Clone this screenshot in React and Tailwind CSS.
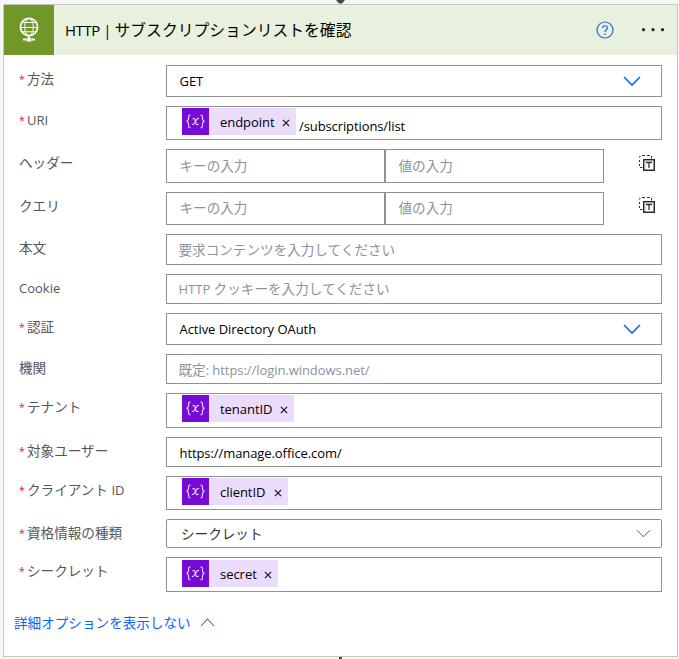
const chevronDown = 'M1 1 L9 9 L17 1';

function Ja({ children }) {
  return <span className="text-[13.6px] tracking-normal">{children}</span>;
}

function Row({ label, required, height, children }) {
  return (
    <div className="flex">
      <div className="flex h-7 w-[147px] shrink-0 items-center text-[#555657]">
        {required && <span className="w-2 text-[10.5px] text-[#e8112d]">*</span>}
        <span className="whitespace-pre">{label}</span>
      </div>
      <div className={`flex flex-1 ${height}`}>{children}</div>
    </div>
  );
}

function Field({ children, className = '' }) {
  return (
    <div className={`flex h-full w-full items-center whitespace-pre border border-[#919191] bg-white ${className}`}>
      {children}
    </div>
  );
}

function Token({ name, width }) {
  return (
    <span className={`flex h-[27px] shrink-0 items-center bg-[#ecdcfb] pr-[6px] text-black ${width}`}>
      <span className="flex h-[27px] w-[27px] items-center justify-center bg-[#770bd6]">
        <svg width="21" height="17" viewBox="0 0 21 17" fill="none" stroke="#e9d6fa" strokeWidth="1.1">
          <path d="M5.5 2 C3.5 2 3.6 3 3.6 4.5 C3.6 7 3.4 8 1.5 8.3 C3.4 8.6 3.6 9.7 3.6 12 C3.6 13.8 3.5 14.8 5.5 14.8" />
          <path d="M15.5 2 C17.5 2 17.4 3 17.4 4.5 C17.4 7 17.6 8 19.5 8.3 C17.6 8.6 17.4 9.7 17.4 12 C17.4 13.8 17.5 14.8 15.5 14.8" />
          <path d="M7.4 6 C9 5 9.7 5.5 10 7 L11 10.5 C11.3 12 12.4 12 13.5 10.8 M14 5.6 C12.5 4.8 11.3 6.8 10.4 8.5 C9.5 10.3 8.4 12.2 7 11.2" />
        </svg>
      </span>
      <span className="ml-[11px] pt-px tracking-[-0.04px]">{name}</span>
      <svg className="ml-auto mt-[2px]" width="8" height="8" viewBox="0 0 9 9" stroke="#222" strokeWidth="1.5">
        <path d="M1 1 L8 8 M8 1 L1 8" />
      </svg>
    </span>
  );
}

function TokenField({ name, width, children, className = 'pt-px' }) {
  return (
    <Field className={`pl-[15px] ${className}`}>
      <div className="flex h-full items-start">
        <Token name={name} width={width} />
        {children}
      </div>
    </Field>
  );
}

function SwitchIcon() {
  return (
    <svg width="16" height="17" viewBox="0 0 16 17" fill="none">
      <path d="M0.5 2.5 V1.5 H1.5 M3 0.5 H6 M8 0.5 H11 M12.5 1 V3.5 M0.5 5 V7 M0.5 9 V11 M1 12.5 H3.5" stroke="#333" />
      <rect x="4.75" y="4.75" width="10.5" height="10.5" stroke="#292929" strokeWidth="1.5" />
      <path d="M6 6 H14 M6 6 V14" stroke="#bbb" />
      <path d="M7 7.5 H13 M10 7.5 V13" stroke="#333" strokeWidth="1.3" />
    </svg>
  );
}

function PairField({ iconOffset }) {
  return (
    <>
      <div className="w-[219px]">
        <Field className="pb-px pl-[12.5px] text-[#8d939c]"><Ja>キーの入力</Ja></Field>
      </div>
      <div className="w-[219px]">
        <Field className="pb-px pl-[12.5px] text-[#8d939c]"><Ja>値の入力</Ja></Field>
      </div>
      <div className={`ml-[35px] ${iconOffset}`}><SwitchIcon /></div>
    </>
  );
}

function Select({ value }) {
  return (
    <Field className="justify-between pl-[12.5px] pr-[20.5px] text-black">
      <span className="tracking-[-0.05px]">{value}</span>
      <svg width="18" height="11" viewBox="0 0 18 11" fill="none" stroke="#1267f5" strokeWidth="1.6">
        <path d={chevronDown} />
      </svg>
    </Field>
  );
}

export default function App() {
  return (
    <div className="flex h-[659px] w-[679px] flex-col overflow-hidden bg-[#f7f7f7] font-['Open_Sans','Noto_Sans_CJK_JP',sans-serif] text-[13px] leading-5">
      <div className="flex h-1 pl-[336px]">
        <svg width="9" height="4" viewBox="0 0 9 4"><path d="M0 0 H9 L6 3.5 H3 Z" fill="#484644" /></svg>
      </div>
      <div className="ml-[3px] h-[653px] w-[675px] shrink-0 border border-[#c6c6c6] bg-white">
        <header className="flex h-[50px] items-center bg-[#e8f0de]">
          <div className="flex h-[50px] w-[50px] items-center justify-center bg-[#709727]">
            <svg width="22" height="28" viewBox="0 0 22 28" fill="none" stroke="#fff">
              <circle cx="11" cy="11" r="8.6" strokeWidth="1.7" />
              <ellipse cx="11" cy="11" rx="4.3" ry="8.6" strokeWidth="1" />
              <path d="M4 6.5 H18 M2.5 11.5 H19.5 M4 15.8 H18" strokeWidth="1" />
              <path d="M11 19.5 V23 M5 23.5 H8 M14 23.5 H17" strokeWidth="2" />
              <rect x="8.5" y="22" width="5" height="3.5" fill="#fff" stroke="none" />
            </svg>
          </div>
          <h1 className="ml-[11px] whitespace-pre text-[15px] tracking-[-0.45px] text-black">
            HTTP | <span className="text-[15.8px] tracking-normal">サブスクリプションリストを確認</span>
          </h1>
          <div className="ml-auto flex items-center pr-3">
            <svg width="18" height="18" viewBox="0 0 18 18" fill="none" stroke="#2266e3" strokeWidth="1.2">
              <circle cx="9" cy="9" r="8" />
              <path d="M6.7 7 C6.7 4 11.4 4 11.4 6.9 C11.4 8.8 9 8.8 9 11" />
              <path d="M9 12.5 V14" strokeWidth="1.4" />
            </svg>
            <svg className="ml-[27px]" width="24" height="6" viewBox="0 0 24 6" fill="#252423">
              <circle cx="2.5" cy="2.7" r="1.6" />
              <circle cx="12" cy="2.7" r="1.6" />
              <circle cx="21.5" cy="2.7" r="1.6" />
            </svg>
          </div>
        </header>

        <div className="flex flex-col gap-[9px] pl-[15px] pr-[15px] pt-[10px]">
          <Row label={<Ja>方法</Ja>} required height="h-8">
            <Select value="GET" />
          </Row>
          <Row label="URI" required height="h-[34px]">
            <TokenField name="endpoint" width="w-[114px]">
              <span className="ml-[3px] mt-2 tracking-[-0.1px] text-black">/subscriptions/list</span>
            </TokenField>
          </Row>
          <Row label={<Ja>ヘッダー</Ja>} height="h-[34px]"><PairField iconOffset="mt-[6px]" /></Row>
          <Row label={<Ja>クエリ</Ja>} height="h-[33px]"><PairField iconOffset="mt-[5px]" /></Row>
          <Row label={<Ja>本文</Ja>} height="h-[31px]">
            <Field className="pl-[11.5px] text-[#8d939c]"><Ja>要求コンテンツを入力してください</Ja></Field>
          </Row>
          <Row label="Cookie" height="h-[30px]">
            <Field className="pl-[11.5px] text-[#8d939c]">HTTP <Ja>クッキーを入力してください</Ja></Field>
          </Row>
          <Row label={<Ja>認証</Ja>} required height="h-8">
            <Select value="Active Directory OAuth" />
          </Row>
          <Row label={<Ja>機関</Ja>} height="h-[30px]">
            <Field className="pl-[11.5px] pt-px tracking-[-0.06px] text-[#8d939c]"><Ja>既定</Ja>: https://login.windows.net/</Field>
          </Row>
          <Row label={<Ja>テナント</Ja>} required height="h-[35px]">
            <TokenField name="tenantID" width="w-[112px]" />
          </Row>
          <Row label={<Ja>対象ユーザー</Ja>} required height="h-[30px]">
            <Field className="pl-[12.5px] pt-px tracking-[-0.08px] text-black">https://manage.office.com/</Field>
          </Row>
          <Row label={<><Ja>クライアント</Ja> ID</>} required height="h-[34px]">
            <TokenField name="clientID" width="w-[106px]" />
          </Row>
          <Row label={<Ja>資格情報の種類</Ja>} required height="h-[29px]">
            <Field className="justify-between rounded-[2px] border-[#605e5c] pl-[14px] pr-[10px] text-[#323130]">
              <Ja>シークレット</Ja>
              <svg width="15" height="9" viewBox="0 0 18 10" fill="none" stroke="#605e5c" strokeWidth="1.2">
                <path d={chevronDown} />
              </svg>
            </Field>
          </Row>
          <Row label={<Ja>シークレット</Ja>} required height="h-[35px]">
            <TokenField name="secret" width="w-24" className="pt-0.5" />
          </Row>
        </div>

        <div className="mt-[21px] flex items-center pl-[10px] text-[#0b62f5]">
          <Ja>詳細オプションを表示しない</Ja>
          <svg className="-mt-0.5 ml-[9px]" width="15" height="9" viewBox="0 0 15 9" fill="none" stroke="#3269d6" strokeWidth="1.1">
            <path d="M1 8 L7.5 1 L14 8" />
          </svg>
        </div>
      </div>
      <div className="flex h-0.5 pl-[339px]"><div className="h-0.5 w-[3px] bg-[#484644]" /></div>
    </div>
  );
}
